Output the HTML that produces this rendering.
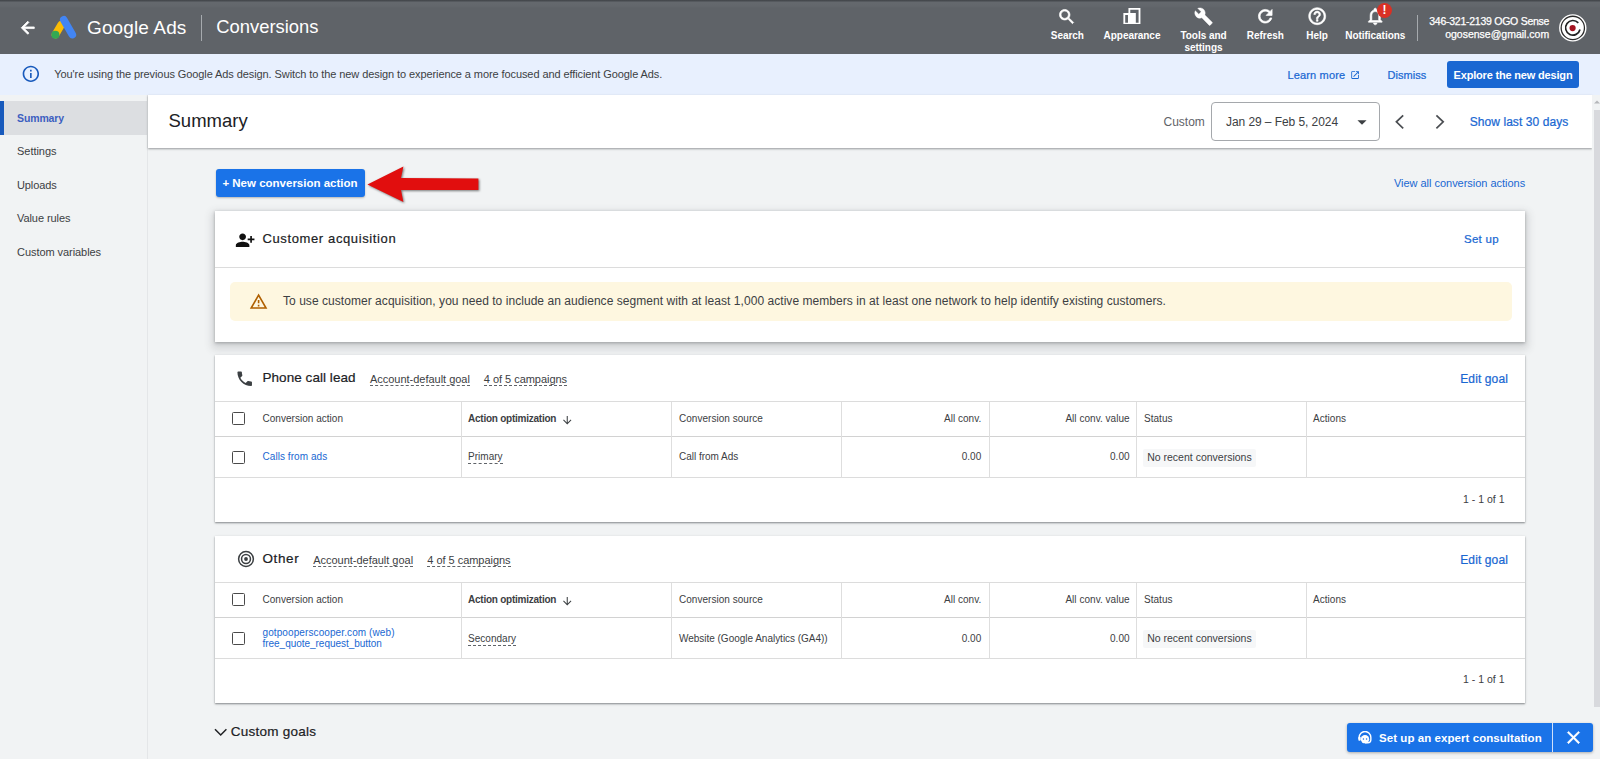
<!DOCTYPE html>
<html><head><meta charset="utf-8"><title>Conversions</title>
<style>
*{box-sizing:border-box;margin:0;padding:0}
html,body{width:1600px;height:759px;overflow:hidden;background:#f1f3f4;font-family:"Liberation Sans",Arial,sans-serif;color:#3c4043}
.abs{position:absolute}
#hdr{position:absolute;left:0;top:0;width:1600px;height:54px;background:linear-gradient(#3e4145 0,#55595e 1.5px,#64686d 2.5px,#63676c 6px,#5f6368 8px)}
#hdr .t{position:absolute;color:#fff;white-space:nowrap}
.navl{position:absolute;color:#fff;font-weight:bold;font-size:10px;line-height:12px;text-align:center;white-space:nowrap;transform:translateX(-50%);letter-spacing:-.04px}
#ban{position:absolute;left:0;top:54px;width:1600px;height:41px;background:#e8f0fe}
#side{position:absolute;left:0;top:95px;width:148px;height:664px;background:#f1f3f4;border-right:1px solid #e4e6e8}
#side div{position:absolute;left:17px;font-size:11px;line-height:14px;color:#3c4043;white-space:nowrap;letter-spacing:-.03px}
#phead{position:absolute;left:148px;top:95px;width:1444px;height:53px;background:#fff;box-shadow:0 1px 2px rgba(60,64,67,.5)}
.blue{color:#1967d2}
.card{position:absolute;left:215px;width:1310px;background:#fff;box-shadow:0 1px 1.5px rgba(60,64,67,.5),0 1px 3px rgba(60,64,67,.15)}
.tx{position:absolute;white-space:nowrap}
.h13{font-size:13.5px;line-height:16px;color:#202124}
.f11{font-size:11px;line-height:14px}
.f10{font-size:10px;line-height:12px;letter-spacing:.03px}
.dot{border-bottom:1px dashed #5f6368}
.vl{position:absolute;width:1px;background:#dedede}
.hl{position:absolute;height:1px;background:#dcdcdc;left:0;width:1310px}
.cb{position:absolute;width:13px;height:13px;border:1.5px solid #4a4a4a;border-radius:1.5px;background:#fff}
.md{-webkit-text-stroke:.2px #202124}
.gs{-webkit-text-stroke:.22px #1967d2}
</style></head><body>

<div id="hdr">
  <svg class="abs" style="left:18px;top:18.3px" width="19.5" height="19.5" viewBox="0 0 24 24"><path d="M20 11H7.83l5.59-5.59L12 4l-8 8 8 8 1.41-1.41L7.83 13H20v-2z" fill="#fff" stroke="#fff" stroke-width="1"/></svg>
  <svg class="abs" style="left:50px;top:14px" width="28" height="27" viewBox="0 0 28 27"><path d="M5.5 20.5 11.2 10.8" stroke="#fbbc04" stroke-width="7.6" stroke-linecap="round"/><path d="M13.8 5.8 22.3 20.6" stroke="#4285f4" stroke-width="7.6" stroke-linecap="round"/><circle cx="5.4" cy="20.8" r="4" fill="#34a853"/></svg>
  <div class="t" style="left:87px;top:15.5px;font-size:19px;line-height:24px;letter-spacing:.12px">Google Ads</div>
  <div class="abs" style="left:201px;top:15px;width:1px;height:26px;background:#a6aaae"></div>
  <div class="t" style="left:216.3px;top:15.4px;font-size:18.4px;line-height:24px">Conversions</div>

  <svg class="abs" style="left:1057px;top:7px" width="19.5" height="19.5" viewBox="0 0 24 24"><path d="M15.5 14h-.79l-.28-.27C15.41 12.59 16 11.11 16 9.5 16 5.91 13.09 3 9.5 3S3 5.91 3 9.5 5.91 16 9.5 16c1.61 0 3.09-.59 4.23-1.57l.27.28v.79l5 4.99L20.49 19l-4.99-5zm-6 0C7.01 14 5 11.99 5 9.5S7.01 5 9.5 5 14 7.01 14 9.5 11.99 14 9.5 14z" fill="#fff" stroke="#fff" stroke-width="0.8" stroke-linejoin="round"/></svg>
  <svg class="abs" style="left:1123.3px;top:7.7px" width="17.8" height="16.6" viewBox="0 0 18.5 18"><path fill-rule="evenodd" fill="#fff" d="M5.5 0H18.5V18H0V5.5H5.5ZM7.5 2V5.5H13.5V16H16.5V2ZM2 7.5V16H5V7.5Z"/></svg>
  <svg class="abs" style="left:1194px;top:6.6px" width="19.2" height="19.2" viewBox="0 0 24 24"><path d="M22.7 19l-9.1-9.1c.9-2.3.4-5-1.5-6.9-2-2-5-2.4-7.4-1.3L9 6 6 9 1.6 4.7C.4 7.1.9 10.1 2.9 12.1c1.9 1.9 4.6 2.4 6.9 1.5l9.1 9.1c.4.4 1 .4 1.4 0l2.3-2.3c.5-.4.5-1.1.1-1.4z" fill="#fff" stroke="#fff" stroke-width="0.5" stroke-linejoin="round"/></svg>
  <svg class="abs" style="left:1254.5px;top:5.5px" width="20.5" height="20.5" viewBox="0 0 24 24"><path d="M17.65 6.35C16.2 4.9 14.21 4 12 4c-4.42 0-7.99 3.58-7.99 8s3.57 8 7.99 8c3.73 0 6.84-2.55 7.73-6h-2.08c-.82 2.33-3.04 4-5.65 4-3.31 0-6-2.69-6-6s2.69-6 6-6c1.66 0 3.14.69 4.22 1.78L13 11h7V4l-2.35 2.35z" fill="#fff" stroke="#fff" stroke-width="0.8" stroke-linejoin="round"/></svg>
  <svg class="abs" style="left:1307px;top:6.4px" width="20.4" height="20.4" viewBox="0 0 24 24"><path d="M11 18h2v-2h-2v2zm1-16C6.48 2 2 6.48 2 12s4.48 10 10 10 10-4.48 10-10S17.52 2 12 2zm0 18c-4.41 0-8-3.59-8-8s3.59-8 8-8 8 3.59 8 8-3.59 8-8 8zm0-14c-2.21 0-4 1.79-4 4h2c0-1.1.9-2 2-2s2 .9 2 2c0 2-3 1.75-3 5h2c0-2.25 3-2.5 3-5 0-2.21-1.79-4-4-4z" fill="#fff" stroke="#fff" stroke-width="0.7" stroke-linejoin="round"/></svg>
  <svg class="abs" style="left:1365.4px;top:5.5px" width="20.5" height="20.5" viewBox="0 0 24 24"><path d="M12 22c1.1 0 2-.9 2-2h-4c0 1.1.9 2 2 2zm6-6v-5c0-3.07-1.63-5.64-4.5-6.32V4c0-.83-.67-1.5-1.5-1.5s-1.5.67-1.5 1.5v.68C7.64 5.36 6 7.92 6 11v5l-2 2v1h16v-1l-2-2zm-2 1H8v-6c0-2.48 1.51-4.5 4-4.5s4 2.02 4 4.5v6z" fill="#fff" stroke="#fff" stroke-width="0.7" stroke-linejoin="round"/></svg>
  <div class="abs" style="left:1376.6px;top:2.8px;width:15.6px;height:15.6px;border-radius:50%;background:#d93025;color:#fff;font-weight:bold;font-size:12px;line-height:15.6px;text-align:center">!</div>
  <div class="navl" style="left:1067.4px;top:30px">Search</div>
  <div class="navl" style="left:1132px;top:30px">Appearance</div>
  <div class="navl" style="left:1203.5px;top:30px">Tools and<br>settings</div>
  <div class="navl" style="left:1265.3px;top:30px">Refresh</div>
  <div class="navl" style="left:1317px;top:30px">Help</div>
  <div class="navl" style="left:1375.3px;top:30px">Notifications</div>
  <div class="abs" style="left:1417px;top:14.5px;width:1px;height:26.5px;background:#a6aaae"></div>
  <div class="t" style="right:50.8px;top:15.3px;font-size:10.5px;line-height:13px;text-align:right;letter-spacing:-.25px;-webkit-text-stroke:.25px #fff">346-321-2139 OGO Sense<br><span style="letter-spacing:0">ogosense@gmail.com</span></div>
  <svg class="abs" style="left:1558px;top:13px" width="30" height="30" viewBox="0 0 30 30"><circle cx="14.8" cy="14.9" r="13" fill="#2a2a2a" stroke="#fff" stroke-width="1.4"/><circle cx="14.8" cy="14.9" r="11" fill="#fff"/><path d="M20.3 9.9A7.3 7.3 0 1 0 22 16.5" fill="none" stroke="#222" stroke-width="1.7"/><circle cx="14.6" cy="15.1" r="3.1" fill="#a3121f"/></svg>
</div>

<div id="ban">
  <svg class="abs" style="left:20.8px;top:10.3px" width="19.7" height="19.7" viewBox="0 0 24 24"><path d="M11 7h2v2h-2zm0 4h2v6h-2zm1-9C6.48 2 2 6.48 2 12s4.48 10 10 10 10-4.48 10-10S17.52 2 12 2zm0 18c-4.41 0-8-3.59-8-8s3.59-8 8-8 8 3.59 8 8-3.59 8-8 8z" fill="#185abc"/></svg>
  <div class="tx" style="left:54.3px;top:13px;font-size:11px;line-height:14px;color:#3c4043;letter-spacing:-.09px">You're using the previous Google Ads design. Switch to the new design to experience a more focused and efficient Google Ads.</div>
  <div class="tx blue gs" style="left:1287.5px;top:14px;font-size:11px;line-height:14px;letter-spacing:.15px">Learn more</div>
  <svg class="abs" style="left:1350px;top:15.6px" width="10.2" height="10.2" viewBox="0 0 24 24"><path d="M19 19H5V5h7V3H5c-1.11 0-2 .9-2 2v14c0 1.1.89 2 2 2h14c1.1 0 2-.9 2-2v-7h-2v7zM14 3v2h3.59l-9.83 9.83 1.41 1.41L19 6.41V10h2V3h-7z" fill="#1967d2"/></svg>
  <div class="tx blue gs" style="left:1387.5px;top:14px;font-size:11px;line-height:14px;letter-spacing:.03px">Dismiss</div>
  <div class="abs" style="left:1446.6px;top:7.4px;width:132.8px;height:26.3px;background:#1a67d2;border-radius:3px;color:#fff;font-weight:bold;font-size:11px;line-height:28.5px;text-align:center;white-space:nowrap;letter-spacing:-.18px">Explore the new design</div>
</div>

<div id="side">
  <span class="abs" style="left:0;top:6px;width:147px;height:33.5px;background:#dcdee1"></span>
  <span class="abs" style="left:0;top:6px;width:3.5px;height:33.5px;background:#185abc"></span>
  <div style="top:15.6px;color:#3c5fc0;font-weight:bold;font-size:10.5px;letter-spacing:-.12px">Summary</div>
  <div style="top:49.1px">Settings</div>
  <div style="top:82.9px;letter-spacing:-.1px">Uploads</div>
  <div style="top:115.8px;letter-spacing:-.08px">Value rules</div>
  <div style="top:149.6px;letter-spacing:-.06px">Custom variables</div>
</div>

<div id="phead">
  <div class="tx" style="left:20.5px;top:14px;font-size:18.5px;line-height:24px;color:#202124">Summary</div>
  <div class="tx" style="left:1015.5px;top:20px;font-size:12px;line-height:14px;color:#5f6368">Custom</div>
  <div class="abs" style="left:1063.3px;top:6.6px;width:168.5px;height:39.6px;border:1px solid #a5a8ac;border-radius:4px"></div>
  <div class="tx" style="left:1078px;top:20px;font-size:12px;line-height:14px;color:#3c4043;letter-spacing:-.07px">Jan 29 – Feb 5, 2024</div>
  <svg class="abs" style="left:1202.7px;top:16.3px" width="22" height="22" viewBox="0 0 24 24"><path d="M7 10l5 5 5-5z" fill="#3c4043"/></svg>
  <svg class="abs" style="left:1246px;top:19px" width="12" height="16" viewBox="0 0 12 16"><path d="M9.2 1.3 2.4 7.8 9.2 14.3" fill="none" stroke="#4a4d51" stroke-width="1.7"/></svg>
  <svg class="abs" style="left:1286px;top:19px" width="12" height="16" viewBox="0 0 12 16"><path d="M2.4 1.3 9.2 7.8 2.4 14.3" fill="none" stroke="#4a4d51" stroke-width="1.7"/></svg>
  <div class="tx blue gs" style="left:1321.7px;top:20px;font-size:12px;line-height:14px;letter-spacing:.07px">Show last 30 days</div>
</div>

<div class="abs" style="left:1592px;top:95px;width:8px;height:664px;background:#f1f3f4"></div>
<div class="abs" style="left:1593.5px;top:109.5px;width:6.5px;height:597px;background:#d8d9dd"></div>
<svg class="abs" style="left:1594px;top:99px" width="6" height="6" viewBox="0 0 6 6"><path d="M0 4.5 3 1.5 6 4.5Z" fill="#b5b7ba"/></svg>

<!-- action row -->
<div class="abs" style="left:215.5px;top:168.5px;width:149px;height:28.7px;background:#1a73e8;border-radius:3px;color:#fff;font-weight:bold;font-size:11.5px;line-height:28.7px;text-align:center;white-space:nowrap;box-shadow:0 1px 2px rgba(0,0,0,.25)">+ New conversion action</div>
<svg class="abs" style="left:360px;top:158px;overflow:visible" width="130" height="54" viewBox="0 0 130 54"><path d="M7.4 26.4 43.4 8.6 41 20 118.4 20.4 118.4 32 41 32 43.4 43.9Z" fill="#e10e0e" style="filter:drop-shadow(1.5px 1.5px 1.3px rgba(0,0,0,.5))"/></svg>
<div class="tx blue f11" style="right:74.8px;top:176px;letter-spacing:-.02px">View all conversion actions</div>

<!-- card 1 -->
<div class="card" style="top:210.5px;height:131px;box-shadow:0 1px 3px 0 rgba(60,64,67,.38),0 4px 8px 3px rgba(60,64,67,.16)">
  <svg class="abs" style="left:20.3px;top:19.3px" width="20.3" height="20.3" viewBox="0 0 24 24"><path d="M13 8c0-2.21-1.79-4-4-4S5 5.79 5 8s1.79 4 4 4 4-1.79 4-4zm2 2v2h3v3h2v-3h3v-2h-3V7h-2v3h-3zM1 18v2h16v-2c0-2.66-5.33-4-8-4s-8 1.34-8 4z" fill="#111"/></svg>
  <div class="tx h13 md" style="left:47.5px;top:20.7px;font-size:13px;letter-spacing:.62px">Customer acquisition</div>
  <div class="tx blue gs" style="right:26px;top:21.5px;font-size:11.5px;line-height:14px;letter-spacing:.3px">Set up</div>
  <div class="hl" style="top:56.5px"></div>
  <div class="abs" style="left:14.5px;top:71.5px;width:1282px;height:38.7px;background:#fef7e0;border-radius:5px"></div>
  <svg class="abs" style="left:34.2px;top:81.5px" width="19.2" height="19.2" viewBox="0 0 24 24"><path d="M12 5.99L19.53 19H4.47L12 5.99M12 2L1 21h22L12 2zm1 14h-2v2h2v-2zm0-6h-2v4h2v-4z" fill="#b06000"/></svg>
  <div class="tx" style="left:68px;top:83px;font-size:12px;line-height:14px;color:#3c4043;letter-spacing:.047px">To use customer acquisition, you need to include an audience segment with at least 1,000 active members in at least one network to help identify existing customers.</div>
</div>

<div class="card" style="top:354.5px;height:167px">
  <div class="tx h13 md" style="left:47.5px;top:15px;letter-spacing:0.05px">Phone call lead</div>
  <div class="tx f11 dot" style="left:155px;top:18.2px;line-height:12.5px;letter-spacing:-.02px">Account-default goal</div>
  <div class="tx f11 dot" style="left:268.8px;top:18.2px;line-height:12.5px;letter-spacing:-.03px">4 of 5 campaigns</div>
  <div class="tx blue gs" style="right:17px;top:17px;font-size:12px;line-height:14px;letter-spacing:.12px">Edit goal</div>
  <div class="hl" style="top:46.5px"></div><div class="hl" style="top:81.5px;background:#d2d2d2"></div><div class="hl" style="top:122.5px"></div>
  <div class="vl" style="left:245.5px;top:47px;height:76px"></div><div class="vl" style="left:456px;top:47px;height:76px"></div><div class="vl" style="left:625.5px;top:47px;height:76px"></div><div class="vl" style="left:773.5px;top:47px;height:76px"></div><div class="vl" style="left:921px;top:47px;height:76px"></div><div class="vl" style="left:1090.5px;top:47px;height:76px"></div>
  <div class="cb" style="left:17.2px;top:57.5px"></div><div class="cb" style="left:17.2px;top:96px"></div>
  <div class="tx f10" style="left:47.5px;top:58.5px">Conversion action</div>
  <div class="tx f10" style="left:253px;top:58.5px;font-weight:bold;letter-spacing:-.24px">Action optimization</div>
  <svg class="abs" style="left:346.2px;top:59.2px" width="12.5" height="12.5" viewBox="0 0 24 24"><path d="M20 12l-1.41-1.41L13 16.17V4h-2v12.17l-5.58-5.59L4 12l8 8 8-8z" fill="#3c4043"/></svg>
  <div class="tx f10" style="left:464px;top:58.5px">Conversion source</div>
  <div class="tx f10" style="right:543.7px;top:58.5px">All conv.</div>
  <div class="tx f10" style="right:395.4px;top:58.5px">All conv. value</div>
  <div class="tx f10" style="left:929px;top:58.5px">Status</div>
  <div class="tx f10" style="left:1098px;top:58.5px">Actions</div>
  <div class="tx f10 dot" style="left:253px;top:96.5px">Primary</div>
  <div class="tx f10" style="left:464px;top:96.5px;letter-spacing:-.02px">Call from Ads</div>
  <div class="tx f10" style="right:543.7px;top:96.5px">0.00</div>
  <div class="tx f10" style="right:395.4px;top:96.5px">0.00</div>
  <div class="abs" style="left:928px;top:94px;width:113px;height:18px;background:#f6f7f8;border-radius:2px"></div>
  <div class="tx" style="left:932.2px;top:96.5px;font-size:10.5px;line-height:12px">No recent conversions</div>
  <div class="tx" style="right:20.5px;top:138.5px;font-size:10.5px;line-height:12px">1 - 1 of 1</div>
  <svg class="abs" style="left:20.2px;top:14px" width="19.4" height="19.4" viewBox="0 0 24 24"><path d="M6.62 10.79c1.44 2.83 3.76 5.14 6.59 6.59l2.2-2.2c.27-.27.67-.36 1.02-.24 1.12.37 2.33.57 3.57.57.55 0 1 .45 1 1V20c0 .55-.45 1-1 1-9.39 0-17-7.61-17-17 0-.55.45-1 1-1h3.5c.55 0 1 .45 1 1 0 1.25.2 2.45.57 3.57.11.35.03.74-.25 1.02l-2.2 2.2z" fill="#3c4043"/></svg>
  <div class="tx f10 blue" style="left:47.5px;top:96.5px;letter-spacing:.06px">Calls from ads</div>
</div>

<div class="card" style="top:535.5px;height:167px">
  <div class="tx h13 md" style="left:47.5px;top:15px;letter-spacing:0.6px">Other</div>
  <div class="tx f11 dot" style="left:98.19999999999999px;top:18.2px;line-height:12.5px;letter-spacing:-.02px">Account-default goal</div>
  <div class="tx f11 dot" style="left:212.3px;top:18.2px;line-height:12.5px;letter-spacing:-.03px">4 of 5 campaigns</div>
  <div class="tx blue gs" style="right:17px;top:17px;font-size:12px;line-height:14px;letter-spacing:.12px">Edit goal</div>
  <div class="hl" style="top:46.5px"></div><div class="hl" style="top:81.5px;background:#d2d2d2"></div><div class="hl" style="top:122.5px"></div>
  <div class="vl" style="left:245.5px;top:47px;height:76px"></div><div class="vl" style="left:456px;top:47px;height:76px"></div><div class="vl" style="left:625.5px;top:47px;height:76px"></div><div class="vl" style="left:773.5px;top:47px;height:76px"></div><div class="vl" style="left:921px;top:47px;height:76px"></div><div class="vl" style="left:1090.5px;top:47px;height:76px"></div>
  <div class="cb" style="left:17.2px;top:57.5px"></div><div class="cb" style="left:17.2px;top:96px"></div>
  <div class="tx f10" style="left:47.5px;top:58.5px">Conversion action</div>
  <div class="tx f10" style="left:253px;top:58.5px;font-weight:bold;letter-spacing:-.24px">Action optimization</div>
  <svg class="abs" style="left:346.2px;top:59.2px" width="12.5" height="12.5" viewBox="0 0 24 24"><path d="M20 12l-1.41-1.41L13 16.17V4h-2v12.17l-5.58-5.59L4 12l8 8 8-8z" fill="#3c4043"/></svg>
  <div class="tx f10" style="left:464px;top:58.5px">Conversion source</div>
  <div class="tx f10" style="right:543.7px;top:58.5px">All conv.</div>
  <div class="tx f10" style="right:395.4px;top:58.5px">All conv. value</div>
  <div class="tx f10" style="left:929px;top:58.5px">Status</div>
  <div class="tx f10" style="left:1098px;top:58.5px">Actions</div>
  <div class="tx f10 dot" style="left:253px;top:97.5px">Secondary</div>
  <div class="tx f10" style="left:464px;top:97.5px;letter-spacing:-.02px">Website (Google Analytics (GA4))</div>
  <div class="tx f10" style="right:543.7px;top:97.5px">0.00</div>
  <div class="tx f10" style="right:395.4px;top:97.5px">0.00</div>
  <div class="abs" style="left:928px;top:94px;width:113px;height:18px;background:#f6f7f8;border-radius:2px"></div>
  <div class="tx" style="left:932.2px;top:96.5px;font-size:10.5px;line-height:12px">No recent conversions</div>
  <div class="tx" style="right:20.5px;top:137.5px;font-size:10.5px;line-height:12px">1 - 1 of 1</div>
  <svg class="abs" style="left:21.6px;top:14.4px" width="18" height="18" viewBox="0 0 19 19"><circle cx="9.5" cy="9.5" r="7.8" fill="none" stroke="#3c4043" stroke-width="1.6"/><circle cx="9.5" cy="9.5" r="4.7" fill="none" stroke="#3c4043" stroke-width="1.6"/><circle cx="9.5" cy="9.5" r="2" fill="#3c4043"/></svg>
  <div class="tx f10 blue" style="left:47.5px;top:91px;line-height:11.5px;letter-spacing:.1px">gotpooperscooper.com (web)<br><span style="letter-spacing:-.03px">free_quote_request_button</span></div>
</div>

<svg class="abs" style="left:213px;top:726px" width="16" height="12" viewBox="0 0 16 12"><path d="M2 3.2 7.7 9 13.4 3.2" fill="none" stroke="#202124" stroke-width="1.5"/></svg>
<div class="tx md" style="left:230.8px;top:723.5px;font-size:13.5px;line-height:16px;color:#202124;letter-spacing:.25px">Custom goals</div>

<div class="abs" style="left:1347px;top:723px;width:245.5px;height:29.3px;background:#1a73e8;border-radius:3px;box-shadow:0 1px 3px rgba(0,0,0,.3)">
  <svg class="abs" style="left:10.5px;top:8.3px" width="14" height="13" viewBox="0 0 15 14"><path d="M1.2 8.5V6.8A6.3 6.3 0 0 1 13.8 6.8V9.5A3.2 3.2 0 0 1 10.6 12.7H7.5" fill="none" stroke="#fff" stroke-width="1.5"/><path d="M3 8.8a4.5 4.5 0 0 1 9 0 4.5 4.5 0 0 1-9 0Z" fill="#fff"/><rect x="0.3" y="6.3" width="2.6" height="4.2" rx="1" fill="#fff"/><circle cx="5.8" cy="8.6" r=".8" fill="#1a73e8"/><circle cx="9.2" cy="8.6" r=".8" fill="#1a73e8"/></svg>
  <div class="tx" style="left:32px;top:7.7px;color:#fff;font-weight:bold;font-size:11.5px;line-height:14px;letter-spacing:.06px">Set up an expert consultation</div>
  <div class="abs" style="left:205px;top:0;width:1px;height:29.3px;background:#cfe0fa"></div>
  <svg class="abs" style="left:215.75px;top:4.4px" width="21" height="21" viewBox="0 0 24 24"><path d="M19 6.41L17.59 5 12 10.59 6.41 5 5 6.41 10.59 12 5 17.59 6.41 19 12 13.41 17.59 19 19 17.59 13.41 12z" fill="#fff" stroke="#fff" stroke-width="0.7" stroke-linejoin="round"/></svg>
</div>
</body></html>
